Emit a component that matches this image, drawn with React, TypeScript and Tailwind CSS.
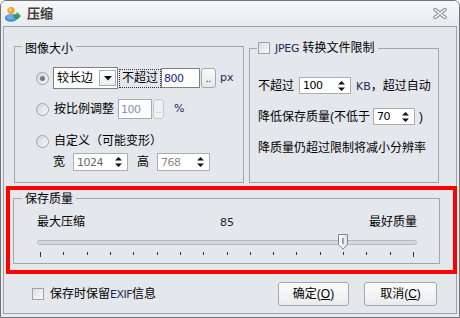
import React from "react";

const FONT = "font-['Liberation_Sans','Noto_Sans_CJK_SC',sans-serif]";

function Radio({ checked }: { checked?: boolean }) {
  return (
    <span className="w-[13px] h-[13px] shrink-0 rounded-full border border-[#9ea2a7] bg-gradient-to-br from-[#d3d6da] to-[#f7f8f9] flex items-center justify-center">
      {checked && <span className="w-[5px] h-[5px] rounded-full bg-[#6b7a8e]" />}
    </span>
  );
}

function Check() {
  return <span className="w-[12px] h-[12px] shrink-0 border border-[#9ea2a7] bg-gradient-to-br from-[#dcdee1] to-[#fafafa]" />;
}

function Arrows() {
  return (
    <svg width="9" height="12" viewBox="0 0 9 12" className="shrink-0">
      <path d="M1 4.5 L8 4.5 L4.5 1 Z" fill="#111" />
      <path d="M1 7.5 L8 7.5 L4.5 11 Z" fill="#111" />
    </svg>
  );
}

function Spin({ cls, value, color }: { cls: string; value: string; color: string }) {
  return (
    <div className={`flex items-center justify-between border border-[#abadb3] bg-white pl-[3px] pr-[4px] ${cls}`}>
      <span className={`text-[11px] leading-none font-['DejaVu_Sans',sans-serif] tracking-[-0.5px] ${color}`}>{value}</span>
      <Arrows />
    </div>
  );
}

function DotsBtn({ cls, disabled }: { cls: string; disabled?: boolean }) {
  return (
    <div
      className={`flex items-end justify-center pb-[3px] rounded-[3px] border ${
        disabled ? "border-[#c4c7cb] bg-[#eef0f2] text-[#b0b3b7]" : "border-[#a4a8ad] bg-gradient-to-b from-[#fafafa] to-[#e6e8ea] text-[#222]"
      } text-[10px] leading-none ${cls}`}
    >
      ..
    </div>
  );
}

function Button({ label, hot }: { label: string; hot: string }) {
  return (
    <div className="flex items-center justify-center h-[24px] rounded-[3px] border border-[#a4a8ad] bg-gradient-to-b from-[#fdfdfd] to-[#e9ebed] text-[12px] text-black">
      {label}(<span className="underline">{hot}</span>)
    </div>
  );
}

export default function App() {
  const ticks = Array.from({ length: 17 }, (_, i) => i);
  return (
    <div className={`w-[460px] h-[318px] overflow-hidden flex flex-col border border-[#6f747b] rounded-t-[6px] bg-[#e9ebee] ${FONT}`}>
      {/* Title bar */}
      <div className="h-[25px] shrink-0 flex items-center pl-[3px] pr-[12px] bg-gradient-to-b from-[#f6f7f8] to-[#e8eaed]">
        <svg width="17" height="17" viewBox="0 0 17 17">
          <ellipse cx="7" cy="13" rx="6" ry="3.8" fill="#3f86d6" />
          <ellipse cx="7" cy="12.2" rx="4.5" ry="2.5" fill="#6aaaf0" />
          <circle cx="7" cy="5.5" r="3.6" fill="#f0a030" />
          <circle cx="6.3" cy="4.8" r="1.6" fill="#ffd27a" />
          <path d="M10 9.5 H13 V7.5 L16.5 11 L13 14.5 V12.5 H10 Z" fill="#34a853" stroke="#1e7a36" strokeWidth="0.6" />
        </svg>
        <span className="ml-[6px] text-[13px] font-bold text-[#3d3d3d] leading-none">压缩</span>
        <div className="flex-1" />
        <svg width="14" height="11" viewBox="0 0 14 11">
          <path d="M2 1.5 L12 9.5 M12 1.5 L2 9.5" stroke="#8d9197" strokeWidth="3.6" strokeLinecap="round" />
          <path d="M2 1.5 L12 9.5 M12 1.5 L2 9.5" stroke="#ffffff" strokeWidth="1.6" strokeLinecap="round" />
        </svg>
      </div>

      {/* Client */}
      <div className="flex-1 mx-[2px] mb-[3px] border border-[#9ea3a9] bg-[#e4e7eb] flex flex-col text-[12px] text-black">
        <div className="flex mt-[9px] pl-[10px] gap-[5px]">
          {/* 图像大小 */}
          <fieldset className="w-[230px] h-[147px] border border-[#a3a6aa]">
            <legend className="ml-[7px] px-[3px] pt-[6px] leading-[14px]">图像大小</legend>
            <div className="flex flex-col pl-[21px] pt-[11px]">
              <div className="h-[22px] flex items-center">
                <Radio checked />
                <div className="ml-[4px] w-[65px] h-[22px] border border-[#7c8187] bg-white flex items-center justify-between pl-[3px] pr-[1px]">
                  <span className="leading-none">较长边</span>
                  <div className="w-[17px] h-[16px] border border-[#a9acb0] bg-gradient-to-b from-white to-[#eceef0] flex items-center justify-center">
                    <svg width="8" height="5" viewBox="0 0 8 5"><path d="M0 0 H8 L4 4.5 Z" fill="#111" /></svg>
                  </div>
                </div>
                <div className="ml-[1px] w-[42px] h-[19px] border border-dotted border-[#333] flex items-center justify-center leading-none">不超过</div>
                <div className="w-[39px] h-[20px] border border-[#7c8187] bg-white flex items-center pl-[2px]">
                  <span className="text-[11px] leading-none font-['DejaVu_Sans',sans-serif] tracking-[-0.5px] text-[#1d1d8a]">800</span>
                </div>
                <DotsBtn cls="ml-px w-[15px] h-[20px]" />
                <span className="ml-[4px] text-[11px] text-[#1f2a5a] font-['DejaVu_Sans',sans-serif]">px</span>
              </div>
              <div className="mt-[10px] h-[20px] flex items-center">
                <Radio />
                <span className="ml-[5px] leading-none">按比例调整</span>
                <div className="ml-[4px] w-[34px] h-[20px] border border-[#a8abb0] bg-white flex items-center pl-[2px]">
                  <span className="text-[11px] leading-none font-['DejaVu_Sans',sans-serif] tracking-[-0.5px] text-[#8a8fb0]">100</span>
                </div>
                <DotsBtn cls="ml-px w-[11px] h-[20px]" disabled />
                <span className="ml-[10px] text-[11px] text-[#1f2a5a] font-['DejaVu_Sans',sans-serif]">%</span>
              </div>
              <div className="mt-[12px] h-[20px] flex items-center">
                <Radio />
                <span className="ml-[5px] leading-none">自定义（可能变形）</span>
              </div>
              <div className="mt-[2px] h-[18px] flex items-center ml-[17px]">
                <span className="leading-none">宽</span>
                <Spin cls="ml-[8px] w-[55px] h-[18px]" value="1024" color="text-[#6a6a6a]" />
                <span className="ml-[9px] leading-none">高</span>
                <Spin cls="ml-[8px] w-[53px] h-[18px]" value="768" color="text-[#8a8a8a]" />
              </div>
            </div>
          </fieldset>

          {/* JPEG */}
          <fieldset className="w-[190px] h-[147px] border border-[#a3a6aa]">
            <legend className="ml-[7px] pl-[1px] pr-[3px] h-[24px] flex items-center">
              <Check />
              <span className="ml-[5px] leading-none">
                <span className="text-[11px] text-[#1f2a5a] font-['DejaVu_Sans',sans-serif] tracking-[-0.3px]">JPEG</span> 转换文件限制
              </span>
            </legend>
            <div className="flex flex-col pl-[8px]">
              <div className="mt-[17px] h-[17px] flex items-center">
                <span className="leading-none">不超过</span>
                <Spin cls="ml-[5px] w-[52px] h-[17px]" value="100" color="text-black" />
                <span className="ml-[5px] leading-none">
                  <span className="text-[11px] text-[#1f2a5a] font-['DejaVu_Sans',sans-serif]">KB</span>，超过自动
                </span>
              </div>
              <div className="mt-[14px] h-[17px] flex items-center">
                <span className="leading-none">降低保存质量(不低于</span>
                <Spin cls="ml-[3px] w-[42px] h-[17px]" value="70" color="text-black" />
                <span className="ml-[4px] leading-none">)</span>
              </div>
              <div className="mt-[14px] h-[17px] flex items-center">
                <span className="leading-none">降质量仍超过限制将减小分辨率</span>
              </div>
            </div>
          </fieldset>
        </div>

        {/* Highlighted quality */}
        <div className="mt-[3px] ml-[2px] w-[451px] h-[88px] border-4 border-[#ff0000] shrink-0">
          <fieldset className="ml-[3px] w-[425px] h-[74px] border border-[#a3a6aa]">
            <legend className="ml-[8px] px-[3px] pt-[3px] leading-[13px]">保存质量</legend>
            <div className="flex flex-col pl-[23px] pr-[22px]">
              <div className="mt-[9px] h-[14px] flex items-center justify-between leading-none">
                <span>最大压缩</span>
                <span className="text-[11px] text-[#222] font-['DejaVu_Sans',sans-serif]">85</span>
                <span>最好质量</span>
              </div>
              <div className="mt-[11px] relative h-[5px] w-[380px] rounded-full border border-[#b3b8bf] bg-[#d5d9de]">
                <svg width="10" height="16" viewBox="0 0 10 16" className="absolute left-[300px] top-[-7px]">
                  <defs>
                    <linearGradient id="tg" x1="0" y1="0" x2="1" y2="0">
                      <stop offset="0" stopColor="#ffffff" />
                      <stop offset="1" stopColor="#dfe2e6" />
                    </linearGradient>
                  </defs>
                  <path d="M0.5 0.5 H9.5 V10.5 L5 15.3 L0.5 10.5 Z" fill="url(#tg)" stroke="#7f868f" />
                  <path d="M5 4 V10" stroke="#555" strokeWidth="1" />
                </svg>
              </div>
              <div className="mt-[7px] mx-[3px] flex justify-between items-start w-[374px]">
                {ticks.map((i) => (
                  <span key={i} className={`w-px bg-[#333] ${i === 0 || i === 16 ? "h-[5px]" : "h-[3px]"}`} />
                ))}
              </div>
            </div>
          </fieldset>
        </div>

        {/* Bottom */}
        <div className="mt-[8px] h-[24px] flex items-center pl-[28px] pr-[19px]">
          <Check />
          <span className="ml-[6px] leading-none">
            保存时保留<span className="text-[11px] text-[#1f2a5a] font-['DejaVu_Sans',sans-serif] tracking-[-0.5px]">EXIF</span>信息
          </span>
          <div className="flex-1" />
          <div className="w-[71px]"><Button label="确定" hot="O" /></div>
          <div className="ml-[15px] w-[73px]"><Button label="取消" hot="C" /></div>
        </div>
      </div>
    </div>
  );
}
